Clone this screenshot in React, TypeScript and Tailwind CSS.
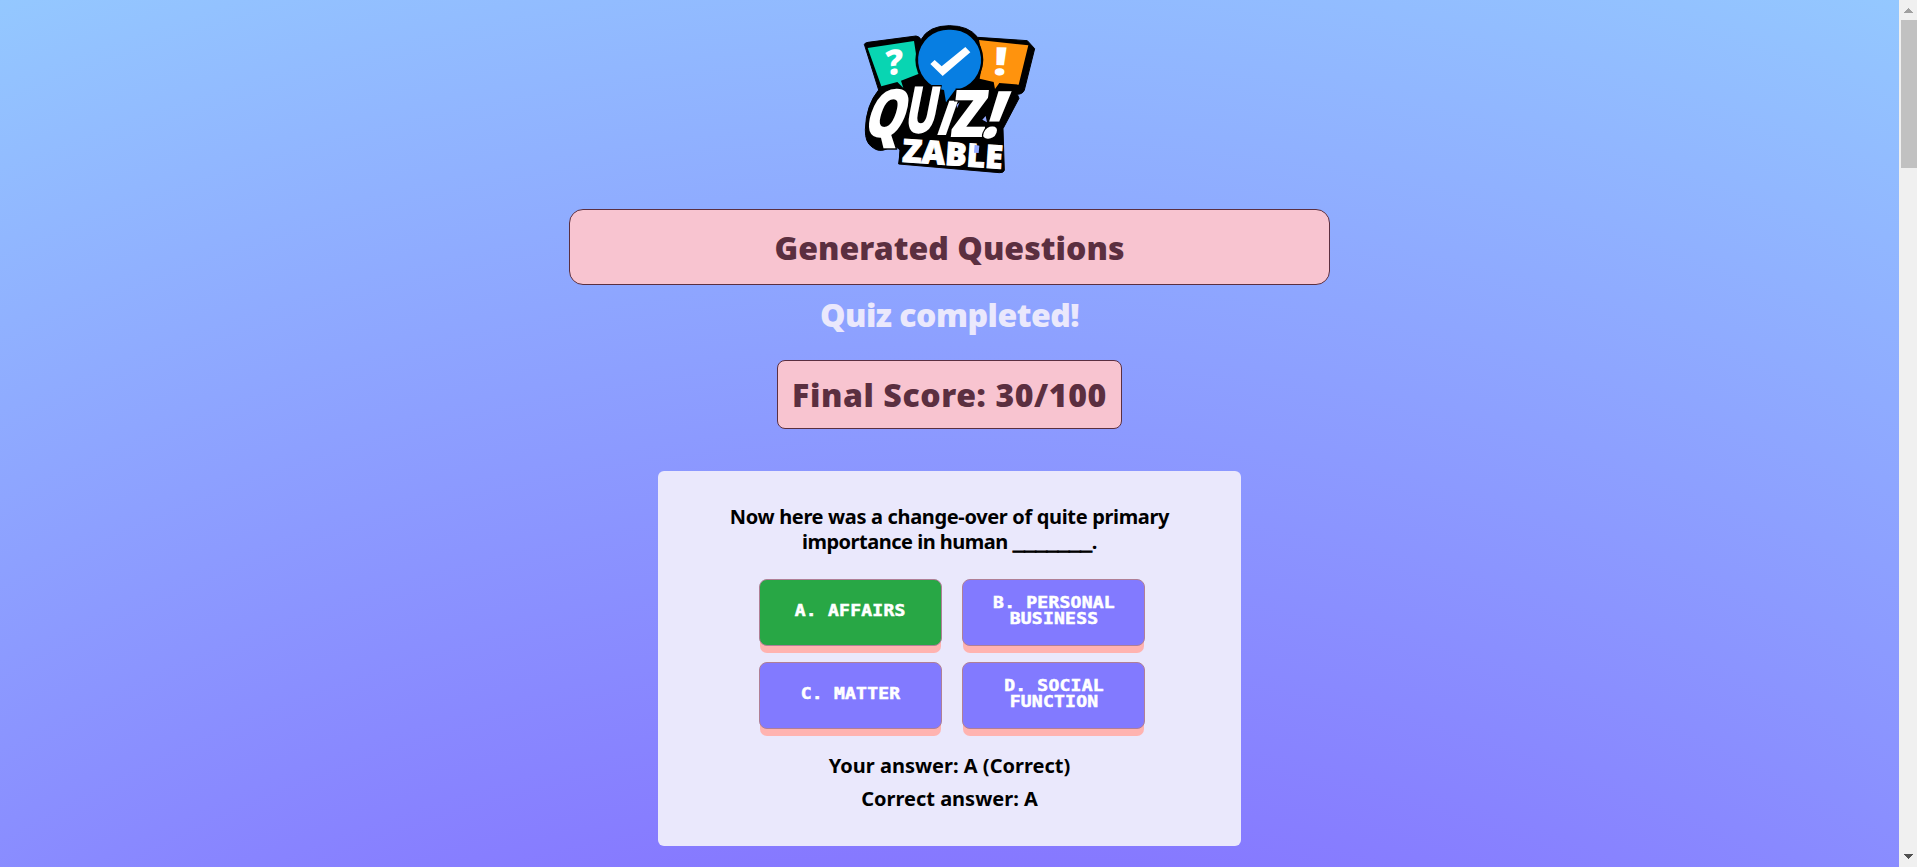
const logoLetters = [
  { ch: 'Q', t: 'matrix(0.78 0 -0.34 1.04 33 366)', s: 192 },
  { ch: 'U', t: 'matrix(0.66 0 -0.2 1.02 158 355)', s: 192 },
  { ch: 'I', t: 'matrix(1.2 0 -0.35 1 249 360)', s: 142 },
  { ch: 'Z', t: 'matrix(0.93 0 -0.12 1.03 297 365)', s: 192 },
  { ch: '!', t: 'matrix(0.95 0 -0.36 1 388 370)', s: 196 },
];

function Logo() {
  return (
    <svg width="200" height="165" className="shrink-0" viewBox="0 0 600 495" aria-label="Quizzable">
      <path
        d="M43 88Q44 84 54 82L198 63Q207 63 213 74Q236 32 298 32Q356 32 383 67L532 77L554 101L523 225Q519 237 502 238L507 250L459 341L463 466Q461 474 448 473L146 447L151 405L130 390L112 401Q87 414 66 396Q45 382 46 344Q48 270 86 225Z"
        fill="#000"
        stroke="#000"
        strokeWidth="3"
      />
      <path d="M53 99L192 78L207 176L153 197L160 219L142 201L94 214Z" fill="#08d5b2" />
      <path d="M387 75L535 91L506 209L448 204L435 222L431 201L389 191L399 135Z" fill="#ff930d" />
      <circle cx="298" cy="134" r="102" fill="#000" />
      <path d="M298 44a91 91 0 0 1 17 181L288 262L282 225A91 91 0 0 1 298 44Z" fill="#077ee2" />
      <path d="M241 147L254 135L275 154L346 96L361 112L278 183Z" fill="#fff" />
      <g fill="#fff" fontFamily="'Noto Sans', sans-serif" fontWeight="900">
        <text transform="matrix(1 -0.15 0.04 1 109 182)" fontSize="104">?</text>
        <text transform="matrix(1.2 0.04 -0.08 1 428 179)" fontSize="116">!</text>
        {logoLetters.map((l) => (
          <text
            key={l.ch}
            transform={l.t}
            fontSize={l.s}
            fontFamily={l.ch === 'I' ? 'Lato, sans-serif' : "'Noto Sans', sans-serif"}
            stroke="#000"
            strokeWidth="8"
            paintOrder="stroke"
          >
            {l.ch}
          </text>
        ))}
        <path d="M151 366L215 366L215 447L146 447Z" fill="#000" />
        <text
          transform="translate(155 440) rotate(4)"
          fontSize="96"
          stroke="#fff"
          strokeWidth="3"
          textLength="302"
          lengthAdjust="spacingAndGlyphs"
        >
          ZABLE
        </text>
      </g>
      <path d="M320 270L329 262L321 280ZM397 314L407 303L411 322ZM374 389L388 392L386 414L372 413Z" fill="#93a9ff" />
    </svg>
  );
}

const answers = [
  { text: 'A. AFFAIRS', correct: true },
  { text: 'B. PERSONAL BUSINESS', correct: false },
  { text: 'C. MATTER', correct: false },
  { text: 'D. SOCIAL FUNCTION', correct: false },
];

function Scrollbar() {
  return (
    <div className="flex w-[18px] shrink-0 flex-col items-end bg-[#f0f0f0]">
      <svg width="16" height="20" viewBox="0 0 16 20" shapeRendering="crispEdges">
        <path d="M3 13L7.500 8L12 13Z" fill="#a0a0a0" />
      </svg>
      <div className="h-[148px] w-4 bg-[#c1c1c1]" />
      <div className="grow" />
      <svg width="16" height="20" viewBox="0 0 16 20" shapeRendering="crispEdges">
        <path d="M3 7L7.500 12L12 7Z" fill="#505050" />
      </svg>
    </div>
  );
}

export default function App() {
  return (
    <div className="flex h-[867px] w-full overflow-hidden font-['Noto_Sans',sans-serif]">
      <main className="flex grow flex-col items-center bg-[radial-gradient(circle_2614px_at_50%_2435px,#8678ff_60%,#94c8ff_100%)] pt-[15px]">
        <Logo />
        <h1 className="mt-[29px] flex h-[76px] w-[761px] shrink-0 items-center justify-center rounded-[14px] border border-[#5b2f40] bg-[#f8c4d0] pt-0.5 text-[32px] font-black tracking-[0.05px] text-[#5b2f40]">
          Generated Questions
        </h1>
        <h2 className="mt-[11px] h-[38px] text-[32px] leading-[38px] font-black tracking-[-0.5px] text-[#eae8fc]">
          Quiz completed!
        </h2>
        <div className="mt-[26px] flex h-[69px] w-[345px] shrink-0 items-center justify-center rounded-lg border border-[#5b2f40] bg-[#f8c4d0] pt-px text-[32px] font-black tracking-[0.6px] whitespace-nowrap text-[#5b2f40]">
          Final Score: 30/100
        </div>
        <section className="mt-[42px] flex h-[375px] w-[583px] shrink-0 flex-col items-center rounded-md bg-[#eae8fc] pt-[33px] text-center text-xl leading-[25px] font-bold text-black">
          <p className="tracking-[-0.34px]">
            Now here was a change-over of quite primary
            <br />
            <span className="tracking-[-0.5px]">importance in human </span>
            <span className="tracking-[-0.34px]">
              <span className="inline-block origin-left scale-x-[1.42] [-webkit-text-stroke:0.8px_black]">_______</span>
              <span className="ml-[24px]">.</span>
            </span>
          </p>
          <div className="mt-[25px] ml-[5px] grid grid-cols-[183px_183px] gap-x-5 gap-y-4">
            {answers.map((a) => (
              <button
                key={a.text}
                className={`flex h-[67px] items-center justify-center rounded-lg border border-[#b07f96] px-5 pb-[3px] font-['DejaVu_Sans_Mono',monospace] text-[15px] leading-4 font-bold text-white shadow-[0_8px_0_-1px_#ffb3b0] ${a.correct ? 'bg-[#28a745]' : 'bg-[#827aff]'}`}
              >
                <span className="max-w-[112px] scale-x-[1.2] tracking-[0.2px] [-webkit-text-stroke:0.5px_white]">
                  {a.text}
                </span>
              </button>
            ))}
          </div>
          <p className="mt-[24px]">Your answer: A (Correct)</p>
          <p className="mt-2">Correct answer: A</p>
        </section>
      </main>
      <Scrollbar />
    </div>
  );
}
